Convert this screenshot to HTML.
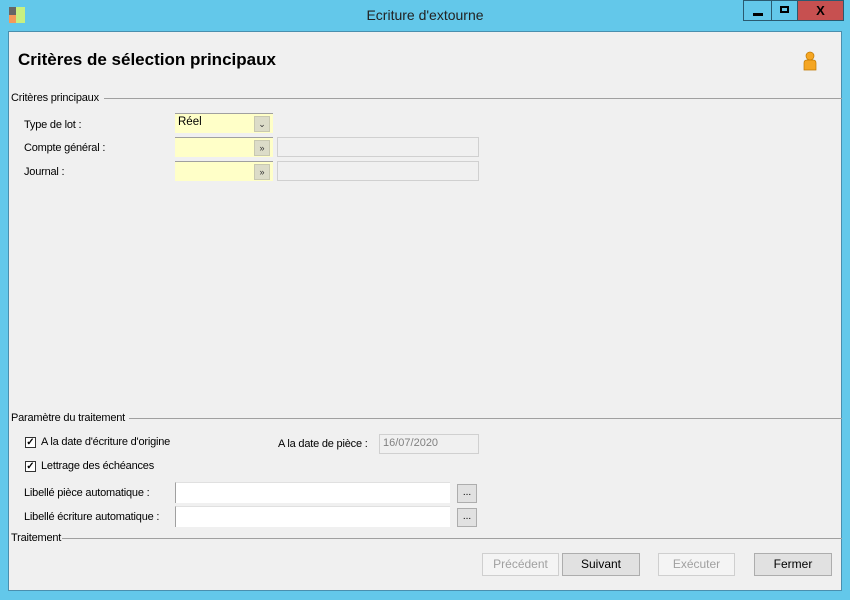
<!DOCTYPE html><html><head><style>
body{margin:0;width:850px;height:600px;background:#63c8ea;position:relative;overflow:hidden;font-family:"Liberation Sans",sans-serif;font-size:12px;color:#000}
.a{position:absolute}
.client{left:8px;top:31px;width:834px;height:560px;background:#f0f0f0;border:1px solid #4a8fae;box-sizing:border-box}
.lbl{font-size:11px;letter-spacing:-0.2px}
.line{height:1px;background:#a0a0a0}
.combo{background:#ffffc8;border-top:1px solid #a0a0a0;height:20px;width:98px;box-sizing:border-box}
.dd{position:absolute;right:3px;top:2px;width:14px;height:14px;background:#dcdcc8;border:1px solid #c8c8b0;font-size:9px;text-align:center;line-height:14px;color:#333}
.ro{background:#f0f0f0;border:1px solid #d0d0d0;height:20px;box-sizing:border-box}
.txt{background:#fff;border-left:1px solid #a0a0a0;border-top:1px solid #e0e0e0;height:21px;box-sizing:border-box}
.btn{border:1px solid #adadad;background:#e1e1e1;height:23px;box-sizing:border-box;text-align:center;line-height:21px;font-size:12px}
.dis{color:#a0a0a0;background:#f4f4f4;border-color:#cfcfcf}
.cb{width:11px;height:11px;border:1px solid #333;background:#fff;box-sizing:border-box;font-size:10px;line-height:9px;text-align:center;font-weight:bold}
</style></head><body>
<div class="a" style="left:9px;top:7px;width:7px;height:8px;background:#666"></div>
<div class="a" style="left:9px;top:15px;width:7px;height:8px;background:#f59a5a"></div>
<div class="a" style="left:16px;top:7px;width:9px;height:16px;background:#c8f080"></div>
<div class="a" style="left:0;top:7px;width:850px;text-align:center;font-size:14px;color:#222">Ecriture d'extourne</div>
<div class="a" style="left:743px;top:0;width:29px;height:21px;border:1px solid #2a5a70;box-sizing:border-box;background:#63c8ea"><div class="a" style="left:9px;top:12px;width:10px;height:3px;background:#000"></div></div>
<div class="a" style="left:771px;top:0;width:27px;height:21px;border:1px solid #2a5a70;box-sizing:border-box;background:#63c8ea"><div class="a" style="left:8px;top:5px;width:9px;height:7px;border:2px solid #000;box-sizing:border-box"></div></div>
<div class="a" style="left:797px;top:0;width:47px;height:21px;border:1px solid #2a5a70;box-sizing:border-box;background:#c75050;text-align:center;font-weight:bold;font-size:13px;line-height:19px">X</div>
<div class="a client"></div>
<div class="a" style="left:18px;top:50px;font-size:17px;font-weight:bold">Critères de sélection principaux</div>
<svg class="a" style="left:801px;top:50px" width="18" height="22"><circle cx="9" cy="6" r="4" fill="#f5a623" stroke="#c07800" stroke-width=".7"/><path d="M3 20 V13 Q3 10 6 10 H12 Q15 10 15 13 V20 Z" fill="#f5a623" stroke="#c07800" stroke-width=".7"/></svg>
<div class="a lbl" style="left:11px;top:92px">Critères principaux</div>
<div class="a line" style="left:104px;top:98px;width:738px"></div>
<div class="a lbl" style="left:24px;top:119px">Type de lot :</div>
<div class="a combo" style="left:175px;top:113px"><span class="a" style="left:3px;top:2px;font-size:11.5px">Réel</span><div class="dd">&#8964;</div></div>
<div class="a lbl" style="left:24px;top:142px">Compte général :</div>
<div class="a combo" style="left:175px;top:137px"><div class="dd">&#187;</div></div>
<div class="a ro" style="left:277px;top:137px;width:202px"></div>
<div class="a lbl" style="left:24px;top:166px">Journal :</div>
<div class="a combo" style="left:175px;top:161px"><div class="dd">&#187;</div></div>
<div class="a ro" style="left:277px;top:161px;width:202px"></div>
<div class="a lbl" style="left:11px;top:412px">Paramètre du traitement</div>
<div class="a line" style="left:129px;top:418px;width:713px"></div>
<div class="a cb" style="left:25px;top:437px">&#10003;</div>
<div class="a lbl" style="left:41px;top:436px">A la date d'écriture d'origine</div>
<div class="a lbl" style="left:278px;top:438px">A la date de pièce :</div>
<div class="a ro" style="left:379px;top:434px;width:100px;color:#808080;font-size:11px;padding:2px 0 0 3px">16/07/2020</div>
<div class="a cb" style="left:25px;top:461px">&#10003;</div>
<div class="a lbl" style="left:41px;top:460px">Lettrage des échéances</div>
<div class="a lbl" style="left:24px;top:487px">Libellé pièce automatique :</div>
<div class="a txt" style="left:175px;top:482px;width:275px"></div>
<div class="a btn" style="left:457px;top:484px;width:20px;height:19px;line-height:15px;font-size:10px">...</div>
<div class="a lbl" style="left:24px;top:511px">Libellé écriture automatique :</div>
<div class="a txt" style="left:175px;top:506px;width:275px"></div>
<div class="a btn" style="left:457px;top:508px;width:20px;height:19px;line-height:15px;font-size:10px">...</div>
<div class="a lbl" style="left:11px;top:532px">Traitement</div>
<div class="a line" style="left:62px;top:538px;width:780px"></div>
<div class="a btn dis" style="left:482px;top:553px;width:77px">Précédent</div>
<div class="a btn" style="left:562px;top:553px;width:78px">Suivant</div>
<div class="a btn dis" style="left:658px;top:553px;width:77px">Exécuter</div>
<div class="a btn" style="left:754px;top:553px;width:78px">Fermer</div>
</body></html>
